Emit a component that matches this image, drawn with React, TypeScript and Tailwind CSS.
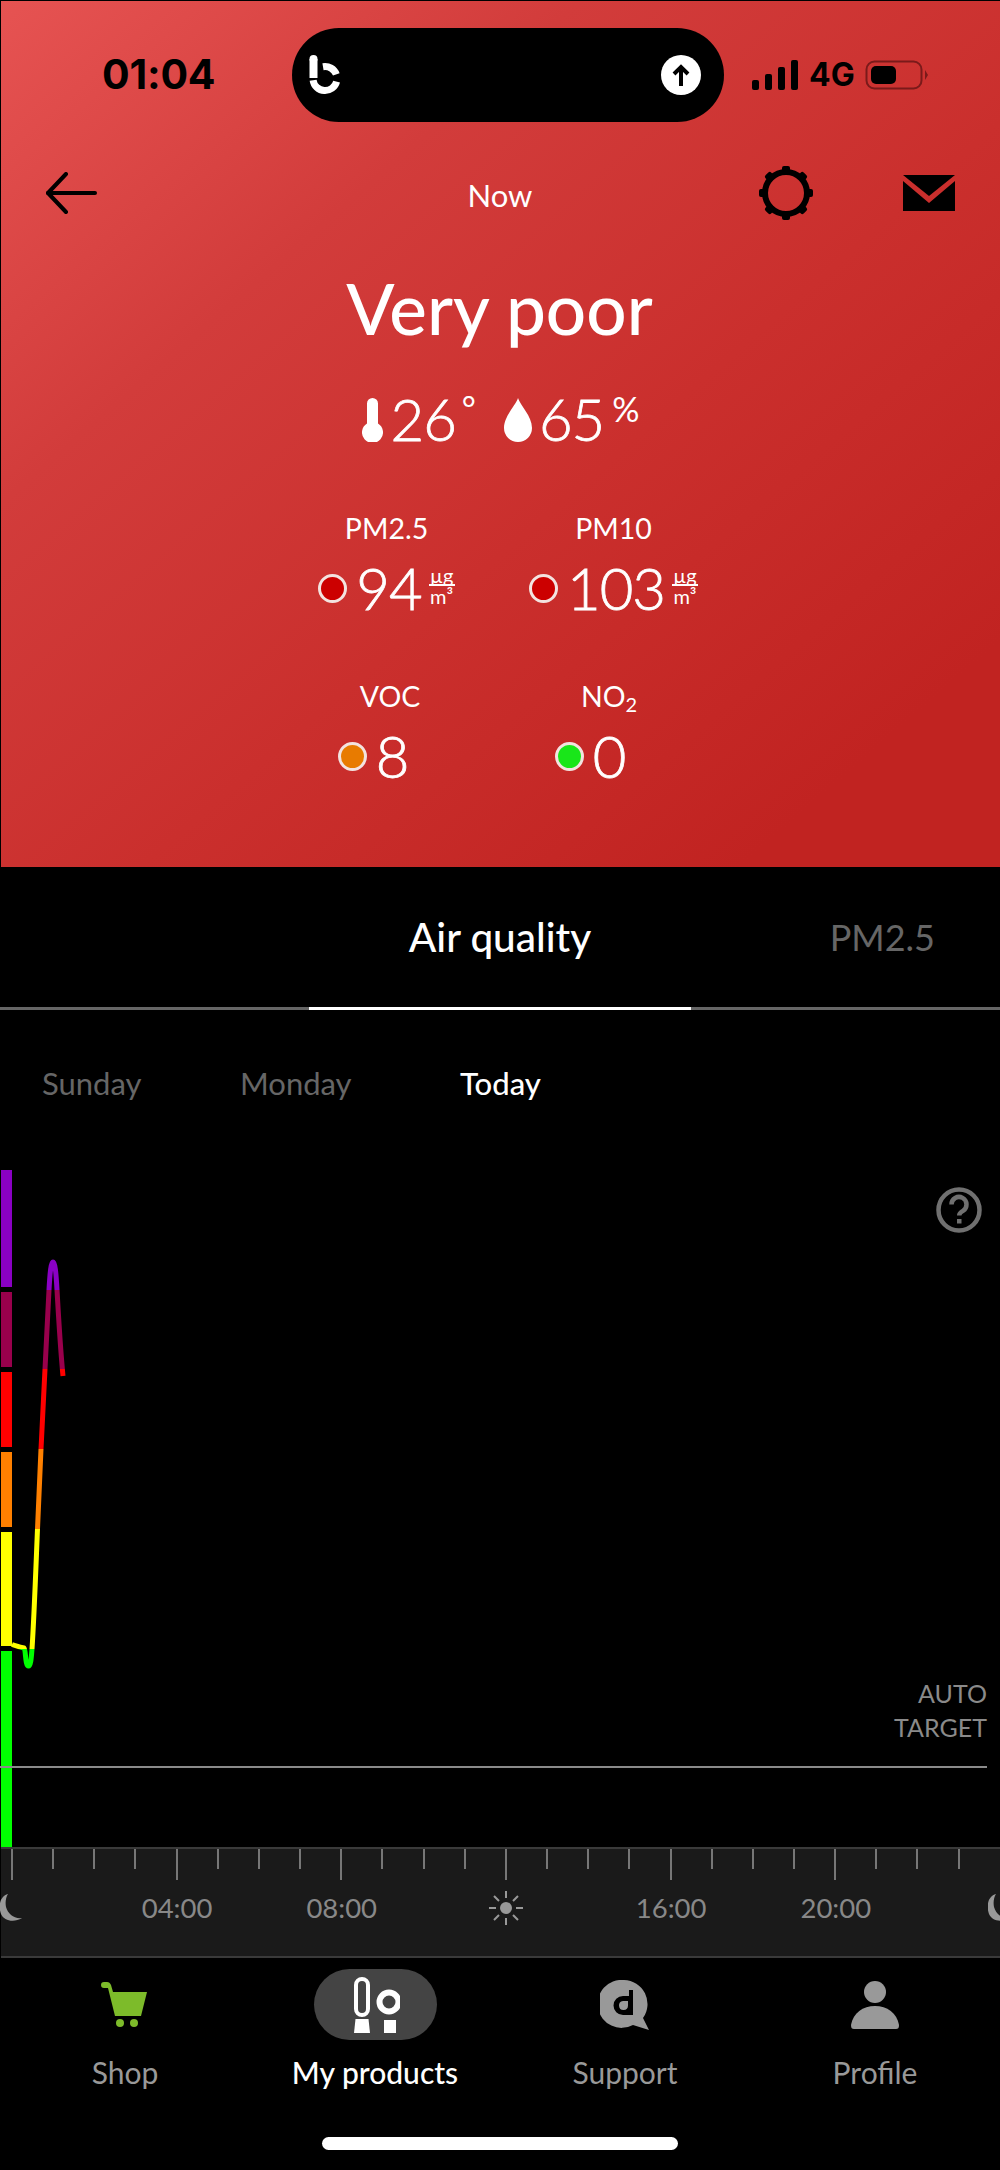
import React from "react";

const Unit = () => (
  <div className="flex flex-col items-center text-[20px] leading-[17px] font-normal ml-[7px] mt-[-5px]">
    <span>µg</span>
    <span className="w-[26px] h-[2px] bg-white" />
    <span className="mt-[2px]">m³</span>
  </div>
);

const Reading = ({
  label,
  value,
  dot,
  unit,
  labelClass,
  rowClass,
}: {
  label: React.ReactNode;
  value: string;
  dot: string;
  unit?: boolean;
  labelClass: string;
  rowClass: string;
}) => (
  <div className="flex flex-col w-[227px]">
    <div className={`text-[28.5px] leading-[32px] text-center ${labelClass}`}>{label}</div>
    <div className={`flex items-center justify-center h-[62px] mt-[13px] ${rowClass}`}>
      <span className={`w-[29px] h-[29px] rounded-full border-[3px] border-[#f3e3e0] ${dot}`} />
      <span className="text-[58px] leading-[62px] font-light tracking-[-1px] ml-[9px] [-webkit-text-stroke:0.8px_white]">
        {value}
      </span>
      {unit && <Unit />}
    </div>
  </div>
);

const bands = [
  { c: "#8a00c4", y: 1250, h: 40 },
  { c: "#99004c", y: 1290, h: 79 },
  { c: "#ff0000", y: 1369, h: 80 },
  { c: "#ff8000", y: 1449, h: 80 },
  { c: "#ffff00", y: 1529, h: 120 },
  { c: "#00ff00", y: 1649, h: 30 },
];

const curve =
  "M12 1644.500 C16 1646 20 1647 24 1648 C26 1650 25 1666 28.500 1666 C31 1666 31.500 1655 32 1649 C34 1620 36 1565 37.500 1529 C39 1495 40 1470 41 1449 C42.500 1420 44 1390 45 1369 C46.500 1340 48 1308 49 1290 C50 1272 51 1262 53 1262 C55 1262 56 1272 57 1290 C58.500 1315 60 1345 63 1376";

const Moon = () => (
  <svg width="24" height="28" viewBox="0 0 24 28" fill="#999">
    <path d="M8 0C0 2-2 12 1 20c3 7 13 9 21 4C14 25 8 20 6 13 5 8 6 3 8 0z" />
  </svg>
);

const axisCells = [
  <Moon key="m1" />,
  "04:00",
  "08:00",
  <svg key="sun" width="34" height="34" viewBox="0 0 34 34" stroke="#999" strokeWidth="2">
    <circle cx="17" cy="17" r="6" fill="#999" stroke="none" />
    <path d="M17 0v7M17 27v7M0 17h7M27 17h7M5 5l5 5M24 24l5 5M5 29l5-5M24 10l5-5" />
  </svg>,
  "16:00",
  "20:00",
  <Moon key="m2" />,
];

export default function App() {
  const ticks = Array.from({ length: 24 });
  return (
    <div
      className="w-[1000px] h-[2170px] bg-black text-white overflow-hidden"
      style={{ fontFamily: "Lato, 'Noto Sans', sans-serif" }}
    >
      {/* red summary panel */}
      <div className="h-[866px] ml-px mt-px bg-[linear-gradient(to_bottom_right,#e65352_0%,#d23c3b_29%,#ca2f2d_57%,#c12321_87%)]">
        <div className="flex items-center pt-[27px]">
          <div
            className="w-[291px] pl-[101px] text-[41px] font-bold text-black tracking-[-0.2px]"
            style={{ fontFamily: "Inter, sans-serif" }}
          >
            01:04
          </div>
          <div className="w-[432px] h-[94px] bg-black rounded-full flex items-center justify-between pl-[17px] pr-[23px]">
            <svg width="32" height="40" viewBox="0 0 32 40" fill="none">
              <path d="M4.500 4v19" stroke="#fff" strokeWidth="8" />
              <circle cx="4.500" cy="4" r="4" fill="#fff" />
              <path d="M4.100 25.200A12 12 0 0 0 27.600 26.600" stroke="#fff" strokeWidth="7" />
              <path d="M14 11.700A12 12 0 0 1 27.300 19.400" stroke="#fff" strokeWidth="7" />
            </svg>
            <div className="w-[40px] h-[40px] rounded-full bg-white flex items-center justify-center">
              <svg width="20" height="24" viewBox="0 0 20 24" fill="none" stroke="#000" strokeWidth="4">
                <path d="M10 23V4" />
                <path d="M3 11l7-7 7 7" />
              </svg>
            </div>
          </div>
          <div className="flex items-center ml-[28px] text-black">
            <svg width="46" height="30" viewBox="0 0 46 30" fill="#000">
              <rect x="0" y="20" width="7" height="10" rx="2" />
              <rect x="13" y="14" width="7" height="16" rx="2" />
              <rect x="26" y="7" width="7" height="23" rx="2" />
              <rect x="39" y="0" width="7" height="30" rx="2" />
            </svg>
            <span className="text-[32px] font-bold ml-[11px] leading-none" style={{ fontFamily: "Inter, sans-serif" }}>
              4G
            </span>
            <svg className="ml-[10px]" width="64" height="30" viewBox="0 0 64 30" fill="none">
              <rect x="1.500" y="1.500" width="55" height="27" rx="8" stroke="#7a1a1a" strokeWidth="2" />
              <rect x="6" y="6" width="25" height="18" rx="5" fill="#000" />
              <path d="M60 10l3 5-3 5z" fill="#7a1a1a" />
            </svg>
          </div>
        </div>

        <div className="flex items-center h-[60px] mt-[41px]">
          <div className="w-[399px] pl-[44px]">
            <svg width="52" height="42" viewBox="0 0 52 42" fill="none" stroke="#000" strokeWidth="4" strokeLinecap="round" strokeLinejoin="round">
              <path d="M50 21H3" />
              <path d="M21 2L3 21l18 19" />
            </svg>
          </div>
          <div className="w-[200px] text-center text-[31px] leading-[40px] mt-[4px]">Now</div>
          <svg className="ml-[158px]" width="56" height="56" viewBox="0 0 56 56">
            <circle cx="28" cy="28" r="21" fill="none" stroke="#000" strokeWidth="6" />
            {[0, 45, 90, 135, 180, 225, 270, 315].map((a) => (
              <rect key={a} x="24" y="1" width="8" height="8" rx="2" fill="#000" transform={`rotate(${a} 28 28)`} />
            ))}
          </svg>
          <svg className="ml-[89px]" width="52" height="36" viewBox="0 0 52 36" fill="#000">
            <path d="M0 0h52L26 21z" />
            <path d="M0 6l26 22L52 6v30H0z" />
          </svg>
        </div>

        <div className="text-center text-[71px] leading-[80px] font-medium mt-[45px] pr-[2px]">Very poor</div>

        <div className="flex justify-center items-start mt-[43px]">
          <svg className="mt-[7px]" width="21" height="44" viewBox="0 0 21 44" fill="#fff">
            <path d="M5 5.500a5.500 5.500 0 0 1 11 0v20a10.500 10.500 0 1 1-11 0z" />
          </svg>
          <span className="text-[58px] leading-[56px] font-light tracking-[-1px] ml-[8px] [-webkit-text-stroke:0.8px_white]">26</span>
          <span className="text-[34px] leading-[30px] ml-[6px] mt-[2px]">°</span>
          <svg className="mt-[7px] ml-[28px]" width="28" height="44" viewBox="0 0 28 44" fill="#fff">
            <path d="M14 0c2 7 14 18 14 30a14 14 0 0 1-28 0C0 18 12 7 14 0z" />
          </svg>
          <span className="text-[58px] leading-[56px] font-light tracking-[-1px] ml-[7px] [-webkit-text-stroke:0.8px_white]">65</span>
          <span className="text-[34px] leading-[30px] ml-[8px] mt-[3px]">%</span>
        </div>

        <div className="flex justify-center mt-[65px] pr-[1px]">
          <Reading label="PM2.5" value="94" dot="bg-[#cc0000]" unit labelClass="" rowClass="" />
          <Reading label="PM10" value="103" dot="bg-[#cc0000]" unit labelClass="" rowClass="" />
        </div>
        <div className="flex justify-center mt-[61px]">
          <Reading label="VOC" value="8" dot="bg-[#e87b00]" labelClass="pl-[6px]" rowClass="pr-[28px]" />
          <Reading
            label={
              <>
                NO<sub className="text-[20px]">2</sub>
              </>
            }
            value="0"
            dot="bg-[#19e619]"
            labelClass="pr-[10px]"
            rowClass="pr-[48px]"
          />
        </div>
      </div>

      {/* tabs */}
      <div className="h-[140px] flex items-center relative">
        <div className="w-full text-center text-[40.5px] leading-[48px] font-medium">Air quality</div>
        <div className="absolute right-[65px] text-[36px] leading-[48px] text-[#666]">PM2.5</div>
      </div>
      <div className="h-[3px] bg-[#666] flex justify-center">
        <div className="w-[382px] bg-white" />
      </div>

      <div className="flex h-[146px] items-center pl-[42px] text-[31px] leading-[40px] text-[#666]">
        <span className="w-[198px]">Sunday</span>
        <span className="w-[220px]">Monday</span>
        <span className="text-white font-medium">Today</span>
      </div>

      {/* chart */}
      <div className="relative h-[691px] pt-[14px] pl-px">
        <div className="flex flex-col w-[11px] gap-[5px]">
          <div className="h-[117px] bg-[#8a00c4]" />
          <div className="h-[75px] bg-[#99004c]" />
          <div className="h-[75px] bg-[#ff0000]" />
          <div className="h-[75px] bg-[#ff8000]" />
          <div className="h-[114px] bg-[#ffff00]" />
          <div className="h-[196px] bg-[#00ff00]" />
        </div>

        <svg className="absolute left-0 top-[-1156px]" width="80" height="1847" fill="none">
          <defs>
            {bands.map((b) => (
              <clipPath key={b.c} id={`band-${b.y}`}>
                <rect x="0" y={b.y} width="80" height={b.h} />
              </clipPath>
            ))}
          </defs>
          {bands.map((b) => (
            <path key={b.c} d={curve} stroke={b.c} strokeWidth="5" clipPath={`url(#band-${b.y})`} />
          ))}
        </svg>

        <svg className="absolute right-[18px] top-[31px]" width="46" height="46" viewBox="0 0 46 46" fill="none">
          <circle cx="23" cy="23" r="20.500" stroke="#707070" strokeWidth="4.500" />
          <path d="M15.500 17.500a7.500 7.500 0 1 1 11.500 6.300c-2.600 1.700-3.800 2.300-3.800 4.700" stroke="#707070" strokeWidth="4.500" />
          <rect x="21" y="32" width="4.500" height="4.500" fill="#707070" />
        </svg>

        <div className="absolute right-[13px] top-[520px] text-right text-[25px] leading-[34px] text-[#8a8a8a]">
          AUTO
          <br />
          TARGET
        </div>
        <div className="absolute left-0 right-[13px] top-[610px] h-[2px] bg-[#8a8a8a]" />
      </div>

      {/* time axis */}
      <div className="h-[111px] bg-[#1a1a1a] border-t-2 border-b-2 border-[#3a3a3a] ml-px">
        <div className="flex pl-[10px] gap-[39.17px] h-[32px]">
          {ticks.map((_, i) => (
            <span key={i} className={`w-[2px] bg-[#777] ${i % 4 === 0 ? "h-[31px]" : "h-[20px]"}`} />
          ))}
        </div>
        <div className="flex items-center h-[40px] mt-[7px] -ml-[71px] text-[27.5px] leading-[40px] text-[#888]">
          {axisCells.map((c, i) => (
            <div key={i} className="w-[164.7px] shrink-0 flex justify-center">
              {c}
            </div>
          ))}
        </div>
      </div>

      {/* bottom tab bar */}
      <div className="grid grid-cols-4 pt-[11px]">
        <div className="flex flex-col items-center text-[#999]">
          <div className="h-[71px] flex items-center">
            <svg className="-ml-[2px]" width="46" height="46" viewBox="0 0 46 46" fill="#7dbb2a">
              <path d="M3 0h3c2 0 3 1 4 3l2 7h34l-6 24H14L7 6H3a3 3 0 0 1 0-6z" />
              <circle cx="19" cy="41" r="4" />
              <circle cx="33" cy="41" r="4" />
            </svg>
          </div>
          <span className="text-[30px] leading-[36px] mt-[14px]">Shop</span>
        </div>
        <div className="flex flex-col items-center">
          <div className="w-[123px] h-[71px] rounded-full bg-[#444] flex items-center justify-center">
            <svg width="50" height="58" viewBox="0 0 50 58" fill="#fff">
              <rect x="6" y="3" width="12" height="36" rx="6" fill="none" stroke="#fff" strokeWidth="4" />
              <path d="M5.500 43h13L20 57H4z" />
              <circle cx="39" cy="26" r="9.500" fill="none" stroke="#fff" strokeWidth="6" />
              <path d="M34 44h12v13H34z" />
            </svg>
          </div>
          <span className="text-[30px] leading-[36px] mt-[14px] font-medium">My products</span>
        </div>
        <div className="flex flex-col items-center text-[#999]">
          <div className="h-[71px] flex items-center">
            <svg width="50" height="50" viewBox="0 0 50 50" fill="#999">
              <path d="M24 0a24 24 0 0 1 19 38l6 12-16-5A24 24 0 1 1 24 0z" />
              <path d="M29 10h4v25H23a9.500 9.500 0 0 1 0-19h6zM23 21a4.500 4.500 0 1 0 5 4.500V21z" fill="#000" fillRule="evenodd" />
            </svg>
          </div>
          <span className="text-[30px] leading-[36px] mt-[14px]">Support</span>
        </div>
        <div className="flex flex-col items-center text-[#999]">
          <div className="h-[71px] flex items-center">
            <svg width="48" height="48" viewBox="0 0 48 48" fill="#999">
              <circle cx="24" cy="11" r="11" />
              <path d="M0 44C2 32 12 25 24 25s22 7 24 19c0 3-1 4-3 4H3c-2 0-3-1-3-4z" />
            </svg>
          </div>
          <span className="text-[30px] leading-[36px] mt-[14px]">Profile</span>
        </div>
      </div>

      <div className="w-[356px] h-[13px] rounded-full bg-white mx-auto mt-[47px]" />
    </div>
  );
}
